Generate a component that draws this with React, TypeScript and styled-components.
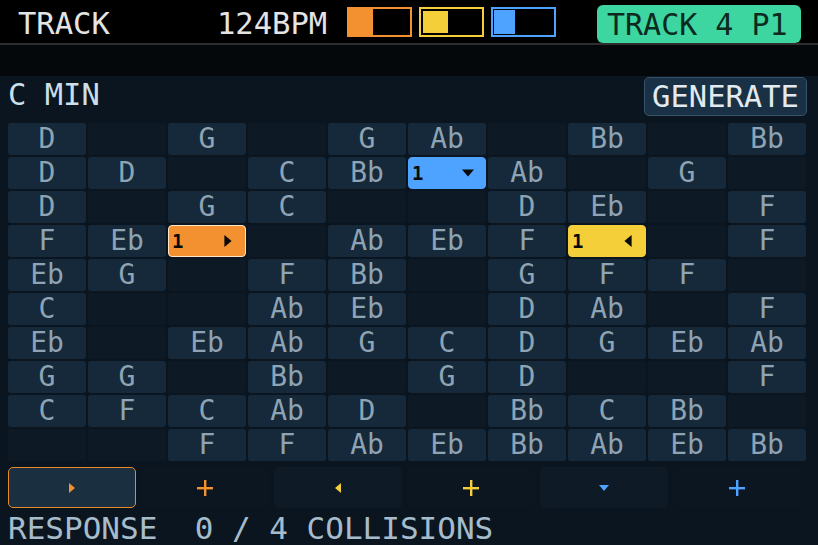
import React from "react";
import styled, { createGlobalStyle } from "styled-components";

const GlobalStyle = createGlobalStyle`
  html, body {
    margin: 0;
    padding: 0;
    background: #000;
  }
  body {
    font-family: "DejaVu Sans Mono", "Liberation Mono", monospace;
  }
`;

type Accent = "orange" | "yellow" | "blue";
type Dir = "right" | "left" | "down";

const accentColors: Record<Accent, string> = {
  orange: "#f39130",
  yellow: "#f5cf3a",
  blue: "#4da3ff",
};

// "" = empty slot, o/b/y = an active step of that track
const grid: string[][] = [
  ["D", "", "G", "", "G", "Ab", "", "Bb", "", "Bb"],
  ["D", "D", "", "C", "Bb", "b", "Ab", "", "G", ""],
  ["D", "", "G", "C", "", "", "D", "Eb", "", "F"],
  ["F", "Eb", "o", "", "Ab", "Eb", "F", "y", "", "F"],
  ["Eb", "G", "", "F", "Bb", "", "G", "F", "F", ""],
  ["C", "", "", "Ab", "Eb", "", "D", "Ab", "", "F"],
  ["Eb", "", "Eb", "Ab", "G", "C", "D", "G", "Eb", "Ab"],
  ["G", "G", "", "Bb", "", "G", "D", "", "", "F"],
  ["C", "F", "C", "Ab", "D", "", "Bb", "C", "Bb", ""],
  ["", "", "F", "F", "Ab", "Eb", "Bb", "Ab", "Eb", "Bb"],
];

const activeMap: Record<string, { accent: Accent; dir: Dir }> = {
  o: { accent: "orange", dir: "right" },
  b: { accent: "blue", dir: "down" },
  y: { accent: "yellow", dir: "left" },
};

const Screen = styled.div`
  width: 818px;
  height: 545px;
  display: flex;
  flex-direction: column;
  background: #000;
  overflow: hidden;
`;

const Header = styled.header`
  height: 43px;
  display: flex;
  align-items: center;
  padding-left: 18px;
  border-bottom: 2px solid #2e2e2e;
  color: #e4e4e4;
  font-size: 30.5px;
`;

const Title = styled.div`
  width: 199px;
  line-height: 30px;
  margin-top: 5px;
`;

const Bpm = styled.div`
  width: 130px;
  line-height: 30px;
  margin-top: 5px;
`;

const Meters = styled.div`
  display: flex;
  gap: 7px;
  margin-top: 1px;
`;

const Meter = styled.div<{ $accent: Accent; $gap: number }>`
  box-sizing: border-box;
  width: 65px;
  height: 30px;
  border: 2px solid ${(p) => accentColors[p.$accent]};
  padding: ${(p) => p.$gap}px;
  background: #000;
  display: flex;
`;

const MeterFill = styled.div<{ $accent: Accent; $w: number }>`
  width: ${(p) => p.$w}px;
  background: ${(p) => accentColors[p.$accent]};
`;

const Badge = styled.div`
  margin-left: 41px;
  width: 204px;
  height: 38px;
  box-sizing: border-box;
  border-radius: 6px;
  background: #3dd6a0;
  color: #0c2a1f;
  line-height: 40px;
  padding-left: 10px;
  margin-top: 4px;
  font-size: 30px;
`;

const Strip = styled.div`
  height: 31px;
  background: #04080b;
`;

const Panel = styled.main`
  flex: 1;
  background: #0a1520;
  padding: 0 8px;
  display: flex;
  flex-direction: column;
`;

const TopRow = styled.div`
  height: 47px;
  display: flex;
  align-items: center;
  justify-content: space-between;
`;

const Scale = styled.div`
  color: #c9dfea;
  font-size: 30.5px;
  line-height: 30px;
  margin-top: -10px;
`;

const GenerateButton = styled.button`
  box-sizing: border-box;
  height: 39px;
  width: 163px;
  margin-right: 3px;
  margin-top: -6px;
  border: 1px solid #35536b;
  border-radius: 5px;
  background: #1a3044;
  color: #e2eaef;
  font-family: inherit;
  font-size: 30.5px;
  padding: 0;
  line-height: 37px;
`;

const Grid = styled.div`
  display: grid;
  grid-template-columns: repeat(10, 78px);
  grid-auto-rows: 32px;
  gap: 2px;
`;

const Cell = styled.div<{ $filled: boolean }>`
  border-radius: 3px;
  background: ${(p) => (p.$filled ? "#15293a" : "#0d1a25")};
  color: #8ea3b3;
  font-size: 28px;
  line-height: 32px;
  text-align: center;
`;

const ActiveCell = styled.div<{ $accent: Accent }>`
  box-sizing: border-box;
  border-radius: 4px;
  background: ${(p) => accentColors[p.$accent]};
  border: 1px solid ${(p) => (p.$accent === "orange" ? "#ffe6c8" : accentColors[p.$accent])};
  display: flex;
  align-items: center;
  padding-left: 3px;
  color: #0a0a0a;
  font-size: 19px;
  font-weight: bold;
`;

const StepNumber = styled.span`
  width: 50px;
`;

const Controls = styled.div`
  display: grid;
  grid-template-columns: repeat(6, 128px);
  gap: 5px;
  margin-top: 6px;
  height: 41px;
`;

const ControlButton = styled.div<{ $selected?: boolean; $tone: number }>`
  box-sizing: border-box;
  border-radius: 5px;
  display: flex;
  align-items: center;
  justify-content: center;
  background: ${(p) => (p.$selected ? "#1a2f40" : p.$tone ? "#0e1a25" : "#0b1620")};
  border: 1.5px solid ${(p) => (p.$selected ? "#e88a2a" : "transparent")};
`;

const Footer = styled.div`
  color: #a6bccb;
  font-size: 31px;
  line-height: 30px;
  white-space: pre;
  margin-top: 5px;
`;

const Arrow: React.FC<{ dir: Dir; color: string; size?: number }> = ({ dir, color, size = 10 }) => {
  const pts =
    dir === "right" ? "2,0 8,5 2,10" : dir === "left" ? "8,0 2,5 8,10" : "0,2 10,2 5,8";
  return (
    <svg width={size} height={size} viewBox="0 0 10 10">
      <polygon points={pts} fill={color} />
    </svg>
  );
};

const Plus: React.FC<{ color: string }> = ({ color }) => (
  <svg width="16" height="16" viewBox="0 0 16 16">
    <rect x="7" y="0" width="2.4" height="16" fill={color} />
    <rect x="0" y="7" width="16" height="2.4" fill={color} />
  </svg>
);

export default function App() {
  return (
    <>
      <GlobalStyle />
      <Screen>
        <Header>
          <Title>TRACK</Title>
          <Bpm>124BPM</Bpm>
          <Meters>
            <Meter $accent="orange" $gap={0}>
              <MeterFill $accent="orange" $w={24} />
            </Meter>
            <Meter $accent="yellow" $gap={2}>
              <MeterFill $accent="yellow" $w={25} />
            </Meter>
            <Meter $accent="blue" $gap={1}>
              <MeterFill $accent="blue" $w={21} />
            </Meter>
          </Meters>
          <Badge>TRACK 4 P1</Badge>
        </Header>
        <Strip />
        <Panel>
          <TopRow>
            <Scale>C MIN</Scale>
            <GenerateButton>GENERATE</GenerateButton>
          </TopRow>
          <Grid>
            {grid.flatMap((row, r) =>
              row.map((note, c) => {
                const active = activeMap[note];
                if (active) {
                  return (
                    <ActiveCell key={`${r}-${c}`} $accent={active.accent}>
                      <StepNumber>1</StepNumber>
                      <Arrow dir={active.dir} color="#0a0a0a" size={12} />
                    </ActiveCell>
                  );
                }
                return (
                  <Cell key={`${r}-${c}`} $filled={note !== ""}>
                    {note}
                  </Cell>
                );
              })
            )}
          </Grid>
          <Controls>
            <ControlButton $selected $tone={0}>
              <Arrow dir="right" color="#f39130" />
            </ControlButton>
            <ControlButton $tone={0}>
              <Plus color="#f39130" />
            </ControlButton>
            <ControlButton $tone={1}>
              <Arrow dir="left" color="#f5cf3a" />
            </ControlButton>
            <ControlButton $tone={0}>
              <Plus color="#f5cf3a" />
            </ControlButton>
            <ControlButton $tone={1}>
              <Arrow dir="down" color="#4da3ff" />
            </ControlButton>
            <ControlButton $tone={0}>
              <Plus color="#4da3ff" />
            </ControlButton>
          </Controls>
          <Footer>RESPONSE  0 / 4 COLLISIONS</Footer>
        </Panel>
      </Screen>
    </>
  );
}
